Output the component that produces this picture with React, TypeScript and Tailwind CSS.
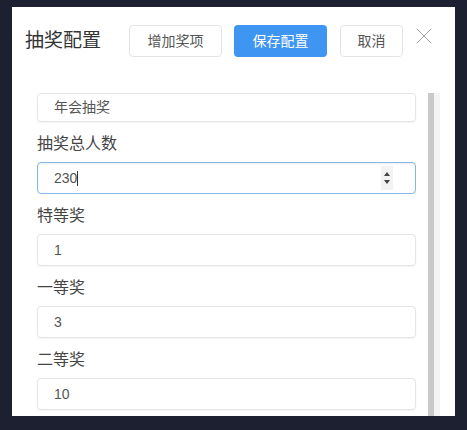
import { X } from "lucide-react";

const font = { fontFamily: '"Liberation Sans", "Noto Sans CJK SC", sans-serif' };

interface IPrize {
  label: string;
  value: string;
}

const prizes: IPrize[] = [
  { label: "特等奖", value: "1" },
  { label: "一等奖", value: "3" },
  { label: "二等奖", value: "10" },
];

function Field({ value, focused, spinner, short }: { value: string; focused?: boolean; spinner?: boolean; short?: boolean }) {
  return (
    <div
      className={`flex items-center justify-between pl-4 pr-[22px] rounded-[4px] border bg-white text-[14px] text-[#555] ${
        short ? "h-[29px]" : "h-8"
      } ${
        focused
          ? "border-[#86b7ea] shadow-[inset_0_1px_2px_rgba(0,0,0,0.08)]"
          : "border-[#e6e6e6] shadow-[0_1px_2px_rgba(0,0,0,0.05)]"
      }`}
    >
      <span className="flex items-center">
        {value}
        {focused && <span className="w-px h-[15px] bg-[#333]" />}
      </span>
      {spinner && (
        <span className="flex flex-col items-center justify-center gap-[4px] w-[12px] h-[24px] bg-[#f3f3f3]">
          <span className="w-0 h-0 border-x-[3px] border-x-transparent border-b-[4px] border-b-[#444]" />
          <span className="w-0 h-0 border-x-[3px] border-x-transparent border-t-[4px] border-t-[#444]" />
        </span>
      )}
    </div>
  );
}

export default function App() {
  return (
    <div className="w-[467px] h-[430px] bg-[#1c2031] pt-[7px] pl-[12px] overflow-hidden" style={font}>
      <div className="w-[443px] h-[409px] bg-white flex flex-col overflow-hidden">
        {/* Header */}
        <div className="flex items-center h-8 mt-[18px] pl-[13px]">
          <h2 className="text-[19px] text-[#333] w-[104px]">抽奖配置</h2>
          <button className="w-[93px] h-8 rounded-[4px] border border-[#e4e4e4] text-[14px] text-[#555] bg-white">
            增加奖项
          </button>
          <button className="ml-[12px] w-[93px] h-8 rounded-[4px] bg-[#3f95f2] text-[14px] text-white">
            保存配置
          </button>
          <button className="ml-[13px] w-[63px] h-8 rounded-[4px] border border-[#e4e4e4] text-[14px] text-[#555] bg-white">
            取消
          </button>
          <X className="ml-[7px] -mt-[10px] w-[28px] h-[28px] text-[#9a9a9a]" strokeWidth={0.8} />
        </div>

        {/* Body */}
        <div className="flex flex-1 mt-[36px] overflow-hidden">
          <div className="w-[379px] ml-[25px]">
            <Field value="年会抽奖" short />
            <div className="mt-2 h-7 leading-7 text-[16px] text-[#444]">抽奖总人数</div>
            <div className="mt-1">
              <Field value="230" focused spinner />
            </div>
            {prizes.map((p) => (
              <div key={p.label}>
                <div className="mt-2 h-7 leading-7 text-[16px] text-[#444]">{p.label}</div>
                <div className="mt-1">
                  <Field value={p.value} />
                </div>
              </div>
            ))}
          </div>
          <div className="ml-[12px] flex">
            <div className="w-[6px] h-full bg-[#c9c9c9]" />
            <div className="w-[6px] h-full bg-[#f4f4f4]" />
          </div>
        </div>
      </div>
    </div>
  );
}
